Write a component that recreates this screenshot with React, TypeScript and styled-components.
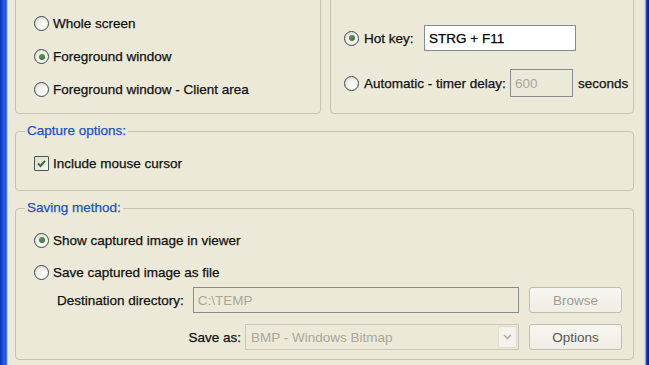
import React from "react";
import styled, { createGlobalStyle } from "styled-components";

const Global = createGlobalStyle`
  html, body { margin: 0; padding: 0; background: #ECE9D8; }
  body {
    font-family: "Liberation Sans", Arial, sans-serif;
    font-size: 13.5px;
    color: #111;
    -webkit-text-stroke: 0.25px currentColor;
  }
`;

const Window = styled.div`
  display: flex;
  width: 649px;
  height: 365px;
  overflow: hidden;
`;

const FrameLeft = styled.div`
  flex: none;
  width: 9px;
  background: linear-gradient(
    to right,
    #0a2db5 0px,
    #1848d6 2px,
    #2a5ee4 4px,
    #1f52dc 6px,
    #7d9ae8 7px,
    #e6e9f3 8px,
    #f1efe4 9px
  );
`;

const FrameRight = styled.div`
  flex: none;
  width: 6px;
  background: linear-gradient(
    to right,
    #e4e6f4 0px,
    #cdd5f3 2px,
    #4a6ad6 3px,
    #102a9c 4px,
    #0a1c7c 6px
  );
`;

const Client = styled.div`
  flex: 1;
  min-width: 0;
  display: flex;
  flex-direction: column;
  gap: 9px;
  padding: 0 9px 0 6px;
  overflow: hidden;
  background: #ece9d8;
`;

const TopRow = styled.div`
  display: grid;
  grid-template-columns: 306px minmax(0, 1fr);
  column-gap: 9px;
  height: 124px;
  margin-top: -10px;
  flex: none;
`;

const Group = styled.fieldset<{ $pad: string }>`
  margin: 0;
  min-width: 0;
  box-sizing: border-box;
  padding: ${(p) => p.$pad};
  border: 1px solid #c6c3b2;
  border-radius: 4px;
`;

const Legend = styled.legend`
  margin-left: -9px;
  padding: 0 2px;
  line-height: 16px;
  color: #2450c8;
`;

const Stack = styled.div<{ $gap?: number }>`
  display: flex;
  flex-direction: column;
  gap: ${(p) => p.$gap ?? 0}px;
`;

const OptionRow = styled.div<{ $h?: number; $gap?: number }>`
  display: flex;
  align-items: center;
  height: ${(p) => p.$h ?? 20}px;
  gap: ${(p) => p.$gap ?? 4}px;
  white-space: nowrap;
`;

const Radio = styled.span<{ $checked?: boolean }>`
  flex: none;
  box-sizing: border-box;
  width: 15px;
  height: 15px;
  border-radius: 50%;
  border: 1.5px solid #3e4850;
  background: radial-gradient(circle at 65% 70%, #ffffff 0%, #f3f2ec 45%, #d6d3c6 100%);
  display: flex;
  align-items: center;
  justify-content: center;
  &::after {
    content: "";
    display: ${(p) => (p.$checked ? "block" : "none")};
    width: 6px;
    height: 6px;
    border-radius: 50%;
    background: radial-gradient(circle at 40% 35%, #5c9a5c, #2f6430);
  }
`;

const CheckBox = styled.span`
  flex: none;
  box-sizing: border-box;
  width: 15px;
  height: 15px;
  border: 1.5px solid #465a52;
  border-radius: 1px;
  background: linear-gradient(135deg, #dcd9cc, #f6f5ef);
  display: flex;
  align-items: center;
  justify-content: center;
`;

const Label = styled.span<{ $w?: number }>`
  flex: none;
  ${(p) => (p.$w ? `width: ${p.$w}px;` : "")}
`;

const TextBox = styled.input<{ $w?: number; $h?: number }>`
  box-sizing: border-box;
  width: ${(p) => (p.$w ? `${p.$w}px` : "auto")};
  height: ${(p) => p.$h ?? 26}px;
  margin: 0;
  padding: 0 4px;
  font: inherit;
  color: #000;
  background: #fff;
  border: 1px solid #868c92;
  outline: none;
  &:disabled {
    background: #ece9d8;
    color: #aaa79a;
    -webkit-text-fill-color: #aaa79a;
    -webkit-text-stroke: 0;
    opacity: 1;
  }
`;

const WideBox = styled(TextBox)`
  flex: 1;
  min-width: 0;
`;

const FileGrid = styled.div`
  display: grid;
  grid-template-columns: 1fr 93px;
  grid-auto-rows: 26px;
  column-gap: 10px;
  row-gap: 11px;
  margin-left: 23px;
  margin-top: 5px;
`;

const FieldCell = styled.div<{ $end?: boolean }>`
  display: flex;
  align-items: center;
  gap: ${(p) => (p.$end ? 4 : 9)}px;
  justify-content: ${(p) => (p.$end ? "flex-end" : "flex-start")};
  min-width: 0;
  white-space: nowrap;
`;

const Combo = styled.div`
  box-sizing: border-box;
  width: 274px;
  height: 26px;
  display: flex;
  align-items: center;
  border: 1px solid #cbc8ba;
  background: #ece9d8;
  color: #aaa79a;
  -webkit-text-stroke: 0;
  padding-left: 5px;
`;

const ComboText = styled.span`
  flex: 1;
`;

const ComboArrow = styled.span`
  flex: none;
  box-sizing: border-box;
  width: 19px;
  height: 22px;
  margin-right: 1px;
  border: 1px solid #dedbd0;
  border-radius: 2px;
  background: #f3f2ec;
  display: flex;
  align-items: center;
  justify-content: center;
`;

const Button = styled.button<{ $dim?: boolean }>`
  box-sizing: border-box;
  width: 93px;
  height: 26px;
  margin: 0;
  padding: 0;
  font: inherit;
  color: ${(p) => (p.$dim ? "#9f9c8f" : "#57564f")};
  -webkit-text-stroke: 0;
  background: linear-gradient(#f7f6f1, #efede4);
  border: 1px solid #c2bfb1;
  border-radius: 3px;
`;

export default function App() {
  return (
    <>
      <Global />
      <Window>
        <FrameLeft />
        <Client>
          <TopRow>
            <Group $pad="16px 0 0 18px">
              <Stack>
                <OptionRow $h={33}>
                  <Radio />
                  <Label>Whole screen</Label>
                </OptionRow>
                <OptionRow $h={33}>
                  <Radio $checked />
                  <Label>Foreground window</Label>
                </OptionRow>
                <OptionRow $h={33}>
                  <Radio />
                  <Label>Foreground window - Client area</Label>
                </OptionRow>
              </Stack>
            </Group>
            <Group $pad="33px 0 0 13px">
              <Stack $gap={17}>
                <OptionRow $h={28} $gap={5}>
                  <Radio $checked />
                  <Label $w={55}>Hot key:</Label>
                  <TextBox $w={152} $h={26} readOnly value="STRG + F11" />
                </OptionRow>
                <OptionRow $h={28} $gap={5}>
                  <Radio />
                  <Label $w={141}>Automatic - timer delay:</Label>
                  <TextBox $w={63} $h={28} disabled value="600" />
                  <Label>seconds</Label>
                </OptionRow>
              </Stack>
            </Group>
          </TopRow>

          <Group $pad="14px 0 17px 18px">
            <Legend>Capture options:</Legend>
            <OptionRow>
              <CheckBox>
                <svg width="11" height="11" viewBox="0 0 11 11">
                  <path d="M2 5.5 L4.5 8 L9 2.8" fill="none" stroke="#2f6f34" strokeWidth="2" />
                </svg>
              </CheckBox>
              <Label>Include mouse cursor</Label>
            </OptionRow>
          </Group>

          <Group $pad="14px 11px 9px 18px">
            <Legend>Saving method:</Legend>
            <Stack $gap={12}>
              <OptionRow>
                <Radio $checked />
                <Label>Show captured image in viewer</Label>
              </OptionRow>
              <OptionRow>
                <Radio />
                <Label>Save captured image as file</Label>
              </OptionRow>
            </Stack>
            <FileGrid>
              <FieldCell>
                <Label>Destination directory:</Label>
                <WideBox disabled value="C:\TEMP" />
              </FieldCell>
              <Button $dim>Browse</Button>
              <FieldCell $end>
                <Label>Save as:</Label>
                <Combo>
                  <ComboText>BMP - Windows Bitmap</ComboText>
                  <ComboArrow>
                    <svg width="9" height="6" viewBox="0 0 9 6">
                      <path d="M1 1 L4.5 4.5 L8 1" fill="none" stroke="#b3b0a3" strokeWidth="1.6" />
                    </svg>
                  </ComboArrow>
                </Combo>
              </FieldCell>
              <Button>Options</Button>
            </FileGrid>
          </Group>
        </Client>
        <FrameRight />
      </Window>
    </>
  );
}
